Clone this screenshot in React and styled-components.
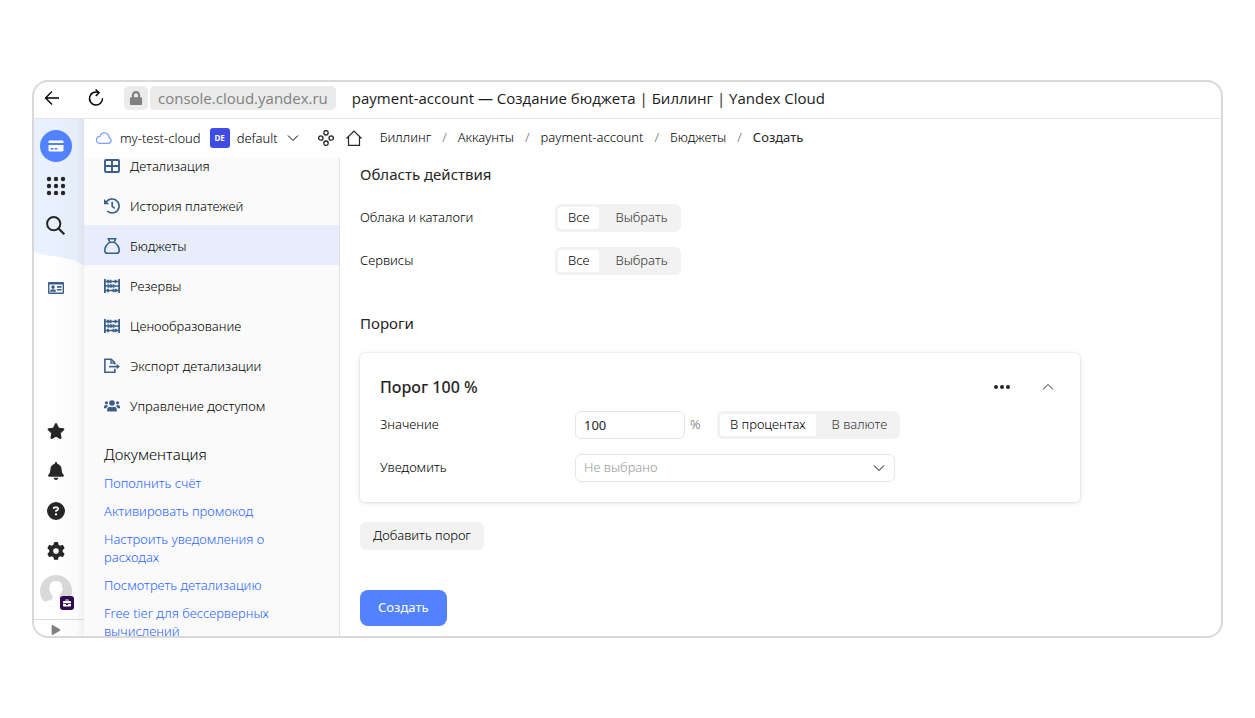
import React from "react";
import styled, { createGlobalStyle } from "styled-components";
import { FaStar, FaBell, FaPlay, FaLock } from "react-icons/fa";
import { FaCircleQuestion, FaGear } from "react-icons/fa6";

const Svg = ({ size = 16, children, ...rest }) => (
  <svg
    width={size}
    height={size}
    viewBox="0 0 16 16"
    fill="none"
    stroke="currentColor"
    strokeWidth="1.5"
    aria-hidden="true"
    {...rest}
  >
    {children}
  </svg>
);

const TableIcon = () => (
  <Svg strokeWidth="1.9">
    <rect x="1" y="2" width="14" height="12" rx="1" />
    <path d="M8 2v12M1 8h14" />
  </Svg>
);

const HistoryIcon = () => (
  <Svg strokeWidth="1.7">
    <path d="M2 4.6A7 7 0 1 1 3.2 13" />
    <path d="M0 1v5.2h5.2z" fill="currentColor" stroke="none" />
    <path d="M8.2 3.8v4.6l2.6 2" />
  </Svg>
);

const BagIcon = () => (
  <Svg strokeWidth="1.6">
    <path d="M5.6 3.8 4.4 0.8h7.2L10.4 3.8M5.6 4.4C3 6.2 0.8 9.6 0.8 12.4c0 1.8 1 2.8 2.6 2.8h9.2c1.6 0 2.6-1 2.6-2.8 0-2.8-2.2-6.2-4.8-8" />
    <path d="M5 4.2h6" />
  </Svg>
);

const AbacusIcon = () => (
  <Svg strokeWidth="1.4">
    <path d="M0.9 1v14M15.1 1v14" strokeWidth="1.8" />
    <path d="M1 3.5h14M1 8h14M1 12.5h14" />
    <path
      d="M4 1.8v3.4M6.5 1.8v3.4M11.5 1.8v3.4M4.5 6.3v3.4M7 6.3v3.4M9.5 6.3v3.4M4 10.8v3.4M9.5 10.8v3.4M12 10.8v3.4"
      strokeWidth="1.8"
    />
  </Svg>
);

const ExportIcon = () => (
  <Svg strokeWidth="1.6">
    <path d="M10.8 10.8v3.4H0.9V1.2h6.4l3.5 3.7v1.6" />
    <path d="M7 1.2v4h4" strokeWidth="1.3" />
    <path d="M5 8.6h9" />
    <path d="M12.6 5.9 16 8.6l-3.4 2.7z" fill="currentColor" stroke="none" />
  </Svg>
);

const UsersIcon = () => (
  <Svg fill="currentColor" stroke="none">
    <circle cx="8" cy="5" r="2.8" />
    <circle cx="2.4" cy="4.8" r="1.6" />
    <circle cx="13.6" cy="4.8" r="1.6" />
    <path d="M3.2 13.6v-2c0-1.8 1.2-2.9 2.9-2.9.6.3 1.2.5 1.9.5s1.3-.2 1.9-.5c1.7 0 2.9 1.1 2.9 2.9v2z" />
    <path d="M0 10.2V8.8C0 7.8.7 7.2 1.6 7.2h1.6c.5 0 .9.2 1.2.5-1 .6-1.7 1.4-1.9 2.5zM16 10.2V8.8c0-1-.7-1.6-1.6-1.6h-1.6c-.5 0-.9.2-1.2.5 1 .6 1.7 1.4 1.9 2.5z" />
  </Svg>
);

const IdIcon = () => (
  <Svg fill="currentColor" stroke="none">
    <path
      fillRule="evenodd"
      d="M1.2 2h13.6c.7 0 1.2.5 1.2 1.2v9.6c0 .7-.5 1.2-1.2 1.2H1.2C.5 14 0 13.5 0 12.8V3.2C0 2.5.5 2 1.2 2zM1.4 4.5v8.1h13.2V4.5z"
    />
    <circle cx="5" cy="7.1" r="1.8" />
    <path d="M2 11.7c0-1.6 1-2.4 3-2.4s3 .8 3 2.4zM9 6h4.5v1.7H9zM9 8.9h4.5v1.7H9z" />
  </Svg>
);

const BackIcon = () => (
  <Svg strokeWidth="1.3">
    <path d="M15 8H1.5M8 1.5 1.5 8 8 14.5" />
  </Svg>
);

const ReloadIcon = () => (
  <svg width="16" height="18" viewBox="0 0 16 18" fill="none" stroke="currentColor" strokeWidth="1.5" aria-hidden="true">
    <path d="M10.8 3.6A6.5 6.5 0 1 0 14.5 9.2" />
    <path d="M7.6 0.5 11 3.8 7.8 7" />
  </svg>
);

const CloudIcon = () => (
  <Svg strokeWidth="1.2">
    <path d="M3.8 13.3h8.7a2.9 2.9 0 0 0 .5-5.7C13.2 4.9 11 2.9 8.5 2.9 6.3 2.9 4.5 4.3 4 6.3a3.5 3.5 0 0 0-.2 7z" />
  </Svg>
);

const LinkedIcon = () => (
  <Svg strokeWidth="1.3">
    <circle cx="8" cy="2.8" r="2.2" />
    <circle cx="2.8" cy="8" r="2.2" />
    <circle cx="13.2" cy="8" r="2.2" />
    <circle cx="8" cy="13.2" r="2.2" />
  </Svg>
);

const HomeIcon = () => (
  <Svg strokeWidth="1.2">
    <path d="M0.5 8.5 8 1l7.5 7.5M2.5 6.7v8.7h11V6.7" />
  </Svg>
);

const Chevron = ({ up }) => (
  <svg width="12" height="8" viewBox="0 0 12 8" fill="none" stroke="currentColor" strokeWidth="1" aria-hidden="true">
    <path d={up ? "M1 6.5 6 1.5l5 5" : "M1 1.5 6 6.5l5-5"} />
  </svg>
);

const BillingIcon = () => (
  <Svg fill="currentColor" stroke="none">
    <path
      fillRule="evenodd"
      d="M1.7 2.5h12.6c.7 0 1.2.5 1.2 1.2V5H.5V3.7c0-.7.5-1.2 1.2-1.2zM.5 7h15v5.3c0 .7-.5 1.2-1.2 1.2H1.7c-.7 0-1.2-.5-1.2-1.2zM2.5 10v1.5h3V10zm4 0v1.5h3V10z"
    />
  </Svg>
);

const GridIcon = () => (
  <svg width="20" height="20" viewBox="0 0 20 20" fill="currentColor" aria-hidden="true">
    {[3, 10, 17].map((y) => [3, 10, 17].map((x) => <circle key={`${x}-${y}`} cx={x} cy={y} r="2.2" />))}
  </svg>
);

const SearchIcon = () => (
  <svg width="20" height="20" viewBox="0 0 20 20" fill="none" stroke="currentColor" strokeWidth="2" aria-hidden="true">
    <circle cx="7.7" cy="7.7" r="6.6" />
    <path d="M12.5 12.5 18.3 18.3" strokeWidth="2.2" />
  </svg>
);

const AvatarIcon = () => (
  <svg width="32" height="32" viewBox="0 0 32 32" aria-hidden="true">
    <circle cx="16" cy="16" r="16" fill="#d9d9d9" />
    <path
      d="M16 6c4.6 0 6.6 2.9 6.3 6.8.9.3.7 3.2-.6 3.7-.4 2-1.3 3.3-2.3 4.1v3.4c.8 1.8 3.6 2.5 6 4.5A16 16 0 0 1 16 32 16 16 0 0 1 4 26.600c3.200-.6 7-1.200 8.500-3.100v-2.900c-1-.8-1.800-2.100-2.200-4.100-1.300-.5-1.500-3.400-.6-3.700C9.400 8.900 11.400 6 16 6z"
      fill="#fff"
    />
  </svg>
);

const CaseIcon = () => (
  <svg width="8" height="8" viewBox="0 0 8 8" fill="#fff" aria-hidden="true">
    <path
      fillRule="evenodd"
      d="M2.5 2V.5h3V2H7c.6 0 1 .4 1 1v1.2H0V3c0-.6.4-1 1-1zm.8 0h1.4v-.8H3.3zM0 5h3v1h2V5h3v1.5c0 .6-.4 1-1 1H1c-.6 0-1-.4-1-1z"
    />
  </svg>
);

const DotsIcon = () => (
  <Svg fill="currentColor" stroke="none">
    <circle cx="2" cy="8" r="2" />
    <circle cx="8" cy="8" r="2" />
    <circle cx="14" cy="8" r="2" />
  </Svg>
);

const navItems = [
  { icon: <TableIcon />, title: "Детализация" },
  { icon: <HistoryIcon />, title: "История платежей" },
  { icon: <BagIcon />, title: "Бюджеты", active: true },
  { icon: <AbacusIcon />, title: "Резервы" },
  { icon: <AbacusIcon />, title: "Ценообразование" },
  { icon: <ExportIcon />, title: "Экспорт детализации" },
  { icon: <UsersIcon />, title: "Управление доступом" },
];

const docs = [
  "Пополнить счёт",
  "Активировать промокод",
  "Настроить уведомления о расходах",
  "Посмотреть детализацию",
  "Free tier для бессерверных вычислений",
];

const crumbs = ["Биллинг", "Аккаунты", "payment-account", "Бюджеты", "Создать"];

const Segmented = ({ name, label, options }) => (
  <Segments role="radiogroup" aria-label={label}>
    {options.map((option, index) => (
      <Segment key={option}>
        <input type="radio" name={name} defaultChecked={index === 0} />
        <span>{option}</span>
      </Segment>
    ))}
  </Segments>
);

const App = () => {
  return (
    <Page>
      <GlobalStyle />
      <Browser>
        <BrowserBar>
          <BarButton aria-label="Назад">
            <BackIcon />
          </BarButton>
          <BarButton aria-label="Обновить">
            <ReloadIcon />
          </BarButton>
          <Address>
            <LockBox>
              <FaLock size={14} />
            </LockBox>
            <Host>console.cloud.yandex.ru</Host>
          </Address>
          <PageTitle>payment-account — Создание бюджета | Биллинг | Yandex Cloud</PageTitle>
        </BrowserBar>
        <Body>
          <Rail>
            <Wave viewBox="0 0 50 148" preserveAspectRatio="none" aria-hidden="true">
              <path d="M0 0h50v147C40 137 16 139 0 133z" fill="#eaf1fe" />
            </Wave>
            <RailGroup>
              <RailButton aria-label="Биллинг">
                <Round>
                  <BillingIcon />
                </Round>
              </RailButton>
              <RailButton aria-label="Все сервисы">
                <GridIcon />
              </RailButton>
              <RailButton aria-label="Поиск">
                <SearchIcon />
              </RailButton>
            </RailGroup>
            <RailGroup>
              <RailButton aria-label="Аккаунт" $muted>
                <IdIcon />
              </RailButton>
            </RailGroup>
            <RailGroup $bottom>
              <RailButton aria-label="Избранное">
                <FaStar size={18} />
              </RailButton>
              <RailButton aria-label="Уведомления">
                <FaBell size={18} />
              </RailButton>
              <RailButton aria-label="Помощь">
                <FaCircleQuestion size={18} />
              </RailButton>
              <RailButton aria-label="Настройки">
                <FaGear size={18} />
              </RailButton>
              <RailButton aria-label="Профиль">
                <AvatarIcon />
                <Badge>
                  <CaseIcon />
                </Badge>
              </RailButton>
            </RailGroup>
            <Expand aria-label="Развернуть">
              <FaPlay size={10} />
            </Expand>
          </Rail>
          <Workspace>
            <TopBar>
              <CloudLink href="#cloud">
                <CloudIcon />
                <span>my-test-cloud</span>
              </CloudLink>
              <FolderButton>
                <FolderBadge>DE</FolderBadge>
                <span>default</span>
                <Chevron />
              </FolderButton>
              <IconLink href="#resources" aria-label="Ресурсы">
                <LinkedIcon />
              </IconLink>
              <IconLink href="#home" aria-label="Главная">
                <HomeIcon />
              </IconLink>
              <Crumbs>
                {crumbs.map((crumb) => (
                  <li key={crumb}>
                    <a href="#crumb">{crumb}</a>
                  </li>
                ))}
              </Crumbs>
            </TopBar>
            <Columns>
              <Side>
                <NavList>
                  {navItems.map(({ icon, title, active }) => (
                    <li key={title}>
                      <NavLink href="#nav" $active={active}>
                        {icon}
                        {title}
                      </NavLink>
                    </li>
                  ))}
                </NavList>
                <Docs>
                  <h3>Документация</h3>
                  {docs.map((doc) => (
                    <a key={doc} href="#docs">
                      {doc}
                    </a>
                  ))}
                </Docs>
              </Side>
              <Main>
                <Section>
                  <h2>Область действия</h2>
                  <Rows>
                    <Row>
                      <RowLabel>Облака и каталоги</RowLabel>
                      <Segmented name="clouds" label="Облака и каталоги" options={["Все", "Выбрать"]} />
                    </Row>
                    <Row>
                      <RowLabel>Сервисы</RowLabel>
                      <Segmented name="services" label="Сервисы" options={["Все", "Выбрать"]} />
                    </Row>
                  </Rows>
                </Section>
                <Section>
                  <h2>Пороги</h2>
                  <Card>
                    <CardHeader>
                      <h3>Порог 100 %</h3>
                      <CardButton aria-label="Действия">
                        <DotsIcon />
                      </CardButton>
                      <CardButton aria-label="Свернуть">
                        <Chevron up />
                      </CardButton>
                    </CardHeader>
                    <Rows>
                      <Row>
                        <RowLabel as="label" htmlFor="value">
                          Значение
                        </RowLabel>
                        <TextInput id="value" defaultValue="100" />
                        <Unit>%</Unit>
                        <Segmented name="unit" label="Единица" options={["В процентах", "В валюте"]} />
                      </Row>
                      <Row>
                        <RowLabel as="label" htmlFor="notify">
                          Уведомить
                        </RowLabel>
                        <SelectBox>
                          <select id="notify">
                            <option>Не выбрано</option>
                          </select>
                          <Chevron />
                        </SelectBox>
                      </Row>
                    </Rows>
                  </Card>
                  <Button>Добавить порог</Button>
                </Section>
                <Button $primary>Создать</Button>
              </Main>
            </Columns>
          </Workspace>
        </Body>
      </Browser>
    </Page>
  );
};

const GlobalStyle = createGlobalStyle`
  * {
    box-sizing: border-box;
  }
  body {
    margin: 0;
    background: #fff;
    color: #000;
    font: 300 13px/18px "Noto Sans", "Open Sans", sans-serif;
  }
  h2, h3, ul, ol {
    margin: 0;
    padding: 0;
    list-style: none;
  }
  a {
    color: inherit;
    text-decoration: none;
  }
  button, input, select {
    margin: 0;
    padding: 0;
    border: 0;
    background: none;
    color: inherit;
    font: inherit;
  }
  svg {
    display: block;
    flex-shrink: 0;
  }
`;

const Page = styled.div`
  height: 100vh;
  padding: 80px 32px;
`;

const Browser = styled.div`
  display: flex;
  flex-direction: column;
  height: 100%;
  border: 2px solid #d9d9d9;
  border-radius: 16px;
  overflow: hidden;
`;

const BrowserBar = styled.header`
  display: flex;
  align-items: center;
  flex-shrink: 0;
  height: 37px;
  padding: 0 10px 4px;
  border-bottom: 1px solid #e5e5e5;
  font-family: "Open Sans", "Noto Sans", sans-serif;
  font-weight: 400;
  font-size: 15px;
  line-height: 24px;
`;

const BarButton = styled.button`
  display: flex;
  width: 16px;
  & + & {
    margin: 0 20px 0 28px;
  }
`;

const Address = styled.div`
  display: flex;
  gap: 2px;
  margin-right: 16px;
  color: #808080;
`;

const LockBox = styled.span`
  display: grid;
  place-items: center;
  width: 24px;
  height: 24px;
  border-radius: 5px;
  background: #ebebeb;
`;

const Host = styled.span`
  padding: 0 8px;
  border-radius: 5px;
  background: #ebebeb;
`;

const PageTitle = styled.span`
  color: #1a1a1a;
  white-space: nowrap;
`;

const Body = styled.div`
  display: flex;
  flex: 1;
  min-height: 0;
`;

const Rail = styled.nav`
  position: relative;
  display: flex;
  flex-direction: column;
  gap: 22px;
  width: 50px;
  flex-shrink: 0;
  padding-top: 7px;
  &::after {
    content: "";
    position: absolute;
    inset: 0;
    background: linear-gradient(to right, transparent 40%, rgba(0, 0, 0, 0.02) 85%, rgba(0, 0, 0, 0.06));
    pointer-events: none;
  }
`;

const Wave = styled.svg`
  position: absolute;
  top: 0;
  left: 0;
  width: 100%;
  height: 148px;
`;

const RailGroup = styled.div`
  position: relative;
  display: flex;
  flex-direction: column;
  margin-top: ${({ $bottom }) => ($bottom ? "auto" : "0")};
  padding-right: 6px;
`;

const RailButton = styled.button`
  position: relative;
  display: grid;
  place-items: center;
  height: 40px;
  color: ${({ $muted }) => ($muted ? "#3a5f88" : "#262626")};
`;

const Round = styled.span`
  display: grid;
  place-items: center;
  width: 32px;
  height: 32px;
  border-radius: 50%;
  background: #5282ff;
  color: #fff;
`;

const Badge = styled.span`
  position: absolute;
  right: 4px;
  bottom: 1px;
  display: grid;
  place-items: center;
  width: 14px;
  height: 14px;
  border-radius: 3px;
  background: #2f0a52;
`;

const Expand = styled.button`
  display: grid;
  place-items: center;
  height: 17px;
  margin-top: -14px;
  padding: 4px 6px 0 0;
  border-top: 1px solid #dcdcdc;
  color: #808080;
`;

const Workspace = styled.div`
  display: flex;
  flex-direction: column;
  flex: 1;
  min-width: 0;
`;

const TopBar = styled.div`
  display: flex;
  align-items: center;
  flex-shrink: 0;
  height: 39px;
  padding: 0 12px 2px;
`;

const CloudLink = styled.a`
  display: flex;
  align-items: center;
  gap: 8px;
  margin-right: 9px;
  svg {
    color: #7c9fff;
  }
`;

const FolderButton = styled.button`
  display: flex;
  align-items: center;
  gap: 7px;
  margin-right: 19px;
  svg {
    margin-left: 2px;
  }
`;

const FolderBadge = styled.span`
  width: 20px;
  border-radius: 3px;
  background: #3f4be5;
  color: #fff;
  font-size: 8px;
  font-weight: 700;
  line-height: 20px;
`;

const IconLink = styled.a`
  margin-right: 12px;
  color: #262626;
`;

const Crumbs = styled.ol`
  display: flex;
  margin-left: 6px;
  padding-bottom: 2px;
  white-space: nowrap;
  li + li::before {
    content: "/";
    margin: 0 11px;
    color: #666;
  }
  li:last-child a {
    color: #262626;
    font-weight: 400;
  }
`;

const Columns = styled.div`
  display: flex;
  flex: 1;
  min-height: 0;
`;

const Side = styled.aside`
  width: 256px;
  flex-shrink: 0;
  overflow: hidden;
  border-right: 1px solid #e0e0e0;
  background: #fafafa;
`;

const NavList = styled.ul`
  margin-top: -13px;
`;

const NavLink = styled.a`
  display: flex;
  align-items: center;
  gap: 10px;
  height: 40px;
  padding: 2px 20px 0;
  background: ${({ $active }) => ($active ? "#e7edfa" : "transparent")};
  svg {
    color: #3a5f88;
  }
`;

const Docs = styled.div`
  display: flex;
  flex-direction: column;
  gap: 10px;
  padding: 19px 60px 0 20px;
  color: #2b66ff;
  h3 {
    color: #000;
    font-size: 15px;
    font-weight: 300;
    line-height: 20px;
  }
`;

const Main = styled.main`
  flex: 1;
  min-width: 0;
  overflow: hidden;
  padding: 8px 20px 0;
`;

const Section = styled.section`
  margin-bottom: 40px;
  h2 {
    padding-bottom: 2px;
    margin-bottom: 20px;
    color: #262626;
    font-size: 15px;
    font-weight: 400;
    line-height: 16px;
  }
`;

const Rows = styled.div`
  display: grid;
  gap: 15px;
`;

const Row = styled.div`
  display: flex;
  align-items: center;
  height: 28px;
`;

const RowLabel = styled.span`
  width: 195px;
  flex-shrink: 0;
  padding-bottom: 2px;
`;

const Segments = styled.div`
  display: flex;
  gap: 6px;
  padding: 3px;
  border-radius: 6px;
  background: #f2f2f2;
`;

const Segment = styled.label`
  input {
    position: absolute;
    opacity: 0;
  }
  span {
    display: block;
    padding: 0 10px 2px;
    border-radius: 3px;
    color: #333;
    line-height: 20px;
  }
  input:checked + span {
    background: #fff;
    color: #000;
  }
`;

const Card = styled.div`
  max-width: 720px;
  margin-bottom: 20px;
  padding: 20px 18px 20px 20px;
  border-radius: 5px;
  box-shadow: 0 0 2px rgba(0, 0, 0, 0.12), 0 1px 5px rgba(0, 0, 0, 0.12);
`;

const CardHeader = styled.div`
  display: flex;
  align-items: center;
  gap: 18px;
  height: 28px;
  margin-bottom: 10px;
  color: #262626;
  h3 {
    flex: 1;
    font-size: 16px;
    font-weight: 500;
  }
`;

const CardButton = styled.button`
  display: grid;
  place-items: center;
  width: 28px;
  height: 28px;
`;

const TextInput = styled.input`
  width: 110px;
  height: 28px;
  padding: 0 8px;
  border: 1px solid #e5e5e5;
  border-radius: 6px;
  color: #262626;
  font-weight: 400;
`;

const Unit = styled.span`
  width: 32px;
  padding: 0 0 2px 5px;
  color: #666;
`;

const SelectBox = styled.div`
  position: relative;
  width: 320px;
  select {
    width: 100%;
    height: 28px;
    padding: 0 8px 2px;
    border: 1px solid #e5e5e5;
    border-radius: 6px;
    color: #999;
    appearance: none;
  }
  svg {
    position: absolute;
    top: 10px;
    right: 10px;
    pointer-events: none;
  }
`;

const Button = styled.button`
  display: block;
  height: ${({ $primary }) => ($primary ? "36px" : "28px")};
  padding: 0 ${({ $primary }) => ($primary ? "18px" : "13px")} 2px;
  border-radius: ${({ $primary }) => ($primary ? "8px" : "6px")};
  background: ${({ $primary }) => ($primary ? "#5282ff" : "#f2f2f2")};
  color: ${({ $primary }) => ($primary ? "#fff" : "#000")};
  font-weight: ${({ $primary }) => ($primary ? "400" : "300")};
`;

export default App;
